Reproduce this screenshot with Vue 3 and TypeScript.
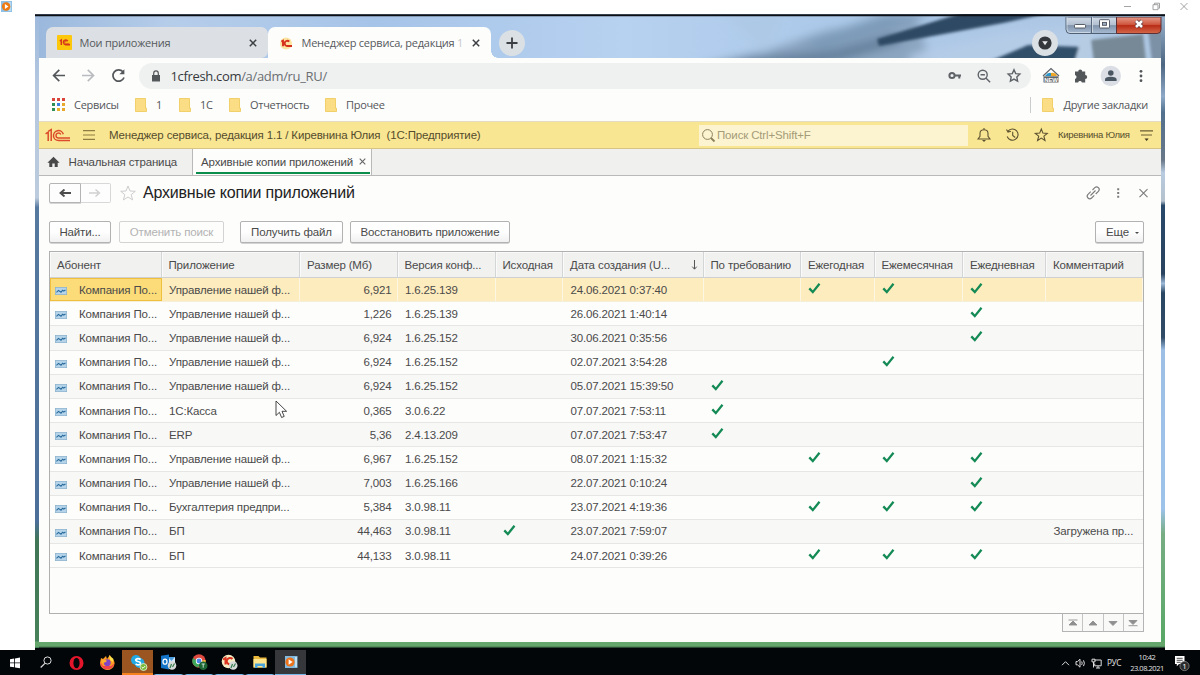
<script setup lang="ts">
interface Row {
  app: string
  size: string
  version: string
  date: string
  source?: boolean
  demand?: boolean
  year?: boolean
  month?: boolean
  day?: boolean
  comment?: string
}

const unf = 'Управление нашей ф...'
const rows: Row[] = [
  { app: unf, size: '6,921', version: '1.6.25.139', date: '24.06.2021 0:37:40', year: true, month: true, day: true },
  { app: unf, size: '1,226', version: '1.6.25.139', date: '26.06.2021 1:40:14', day: true },
  { app: unf, size: '6,924', version: '1.6.25.152', date: '30.06.2021 0:35:56', day: true },
  { app: unf, size: '6,924', version: '1.6.25.152', date: '02.07.2021 3:54:28', month: true },
  { app: unf, size: '6,924', version: '1.6.25.152', date: '05.07.2021 15:39:50', demand: true },
  { app: '1С:Касса', size: '0,365', version: '3.0.6.22', date: '07.07.2021 7:53:11', demand: true },
  { app: 'ERP', size: '5,36', version: '2.4.13.209', date: '07.07.2021 7:53:47', demand: true },
  { app: unf, size: '6,967', version: '1.6.25.152', date: '08.07.2021 1:15:32', year: true, month: true, day: true },
  { app: unf, size: '7,003', version: '1.6.25.166', date: '22.07.2021 0:10:24', day: true },
  { app: 'Бухгалтерия предпри...', size: '5,384', version: '3.0.98.11', date: '23.07.2021 4:19:36', year: true, month: true, day: true },
  { app: 'БП', size: '44,463', version: '3.0.98.11', date: '23.07.2021 7:59:07', source: true, comment: 'Загружена пр...' },
  { app: 'БП', size: '44,133', version: '3.0.98.11', date: '24.07.2021 0:39:26', year: true, month: true, day: true },
]

const headers = ['Абонент', 'Приложение', 'Размер (Мб)', 'Версия конф...', 'Исходная', 'Дата создания (U...', 'По требованию', 'Ежегодная', 'Ежемесячная', 'Ежедневная', 'Комментарий']
const flags = ['demand', 'year', 'month', 'day'] as const
const bookmarks = ['1', '1С', 'Отчетность', 'Прочее']
const appDots = ['#d9453a', '#d9453a', '#d9453a', '#2f8f57', '#3f7fe0', '#e8a82c', '#2f8f57', '#e8b02c', '#e8a82c']
const pagers = ['M3.5 3h9M8 4l-4 4h8z', 'M8 4l-4 4h8z', 'M8 8.5l-4-4h8z', 'M8 7.5l-4-4h8zM3.5 8.7h9']
</script>

<template>
  <div class="screen">
    <header class="player-bar">
      <svg class="player-icon" viewBox="0 0 12 12"><rect width="12" height="12" fill="#8fc1e6" /><rect x="8" y="1" width="3" height="10" fill="#b9dbf2" /><circle cx="5.6" cy="6" r="4.6" fill="#ee7a12" /><path d="M4.2 3.4v5.2L8.2 6z" fill="#fff" /></svg>
      <svg class="player-controls" viewBox="0 0 66 12"><path d="M1 5.500h7M30 3.700h5v5h-5zM31.500 3.700V2.200H36.500v5H35.300M57.500 2l7 7M64.500 2l-7 7" fill="none" stroke="#8b8b8b" stroke-width=".8" /></svg>
    </header>

    <main class="video">
      <svg class="wallpaper" viewBox="0 0 1130 634" preserveAspectRatio="none">
        <defs>
          <linearGradient id="left" x1="0" y1="0" x2="0" y2="1">
            <stop offset="0" stop-color="#9db9dc" /><stop offset=".12" stop-color="#b5c8e0" /><stop offset=".29" stop-color="#bccbdd" /><stop offset=".305" stop-color="#56799f" /><stop offset=".8" stop-color="#4b6f99" /><stop offset=".83" stop-color="#407556" /><stop offset="1" stop-color="#47835a" />
          </linearGradient>
          <linearGradient id="right" x1="0" y1="0" x2="0" y2="1">
            <stop offset="0" stop-color="#9db5cf" /><stop offset=".08" stop-color="#4d6783" /><stop offset=".13" stop-color="#8ea9c8" /><stop offset=".155" stop-color="#52708f" /><stop offset=".23" stop-color="#687788" /><stop offset=".25" stop-color="#b8cbe0" /><stop offset=".295" stop-color="#b5c1cd" /><stop offset=".302" stop-color="#29496b" /><stop offset=".41" stop-color="#29435f" /><stop offset=".425" stop-color="#9db9d8" /><stop offset=".44" stop-color="#294663" /><stop offset=".51" stop-color="#304b66" /><stop offset=".53" stop-color="#9dbfe5" /><stop offset=".78" stop-color="#9dc3eb" /><stop offset=".82" stop-color="#77ad83" /><stop offset="1" stop-color="#57a765" />
          </linearGradient>
          <linearGradient id="sky"><stop offset="0" stop-color="#9ab8dc" /><stop offset=".12" stop-color="#b6cdea" /><stop offset=".3" stop-color="#a6c4e8" /><stop offset=".52" stop-color="#b7d1f0" /><stop offset=".7" stop-color="#acc9e9" /><stop offset="1" stop-color="#adc6e2" /></linearGradient>
          <filter id="soft" x="-10%" y="-50%" width="120%" height="200%"><feGaussianBlur stdDeviation="5" /></filter>
          <filter id="soft2" x="-10%" y="-50%" width="120%" height="200%"><feGaussianBlur stdDeviation="1.700" /></filter>
          <clipPath id="strip"><rect width="1130" height="46" /></clipPath>
        </defs>
        <rect width="1130" height="46" fill="url(#sky)" />
        <g clip-path="url(#strip)">
          <g filter="url(#soft)">
            <path d="M650 55l80-18 60-20 90-16 20 60z" fill="#8ba5c1" />
            <path d="M658 56l60-13 80-8 60-16 10 10-60 18-70 16z" fill="#67839f" />
            <path d="M760 30l90-30h50l-110 35z" fill="#7d9bb9" />
            <path d="M690 0h60l-20 40z" fill="#adc9e6" />
            <path d="M880 40l100-22 80-8v40h-190z" fill="#b5cce7" />
          </g>
          <g filter="url(#soft2)">
            <path d="M842 25L930-2h88l-50 11-124 23z" fill="#2d4963" />
            <path d="M953 48l40-17 54 2v17z" fill="#324f6b" />
            <path d="M1056 26l52-6 3 28h-52z" fill="#778996" />
            <path d="M1040 46l8-26h8l-3 28z" fill="#b6cce2" />
            <path d="M1113 14h20v34h-16z" fill="#7c91a6" />
          </g>
        </g>
        <rect y="0" width="4" height="634" fill="url(#left)" />
        <rect x="1126" y="0" width="4" height="634" fill="url(#right)" />
        <rect y="627.500" width="1130" height="5.500" fill="#65a66c" />
        <path d="M4 633.400h1126" stroke="#2b4b34" stroke-width="1.200" />
        <path d="M0 1.200h1130" stroke="#0c1014" stroke-width="2" />
      </svg>

      <svg class="aero" viewBox="0 0 97 18">
        <defs>
          <linearGradient id="glass" x1="0" y1="0" x2="0" y2="1"><stop offset="0" stop-color="#d3dce8" /><stop offset=".48" stop-color="#b1bfd0" /><stop offset=".52" stop-color="#8194ab" /><stop offset="1" stop-color="#a7bbd2" /></linearGradient>
          <linearGradient id="redglass" x1="0" y1="0" x2="0" y2="1"><stop offset="0" stop-color="#e49c8a" /><stop offset=".45" stop-color="#cf563e" /><stop offset=".52" stop-color="#b92c16" /><stop offset="1" stop-color="#d56a4b" /></linearGradient>
        </defs>
        <path d="M1 0h50.500v16.500H5Q1 16.500 1 12.500z" fill="url(#glass)" stroke="#4f6075" stroke-width="1" />
        <path d="M51.500 0H96v12.500q0 4-4 4H51.500z" fill="url(#redglass)" stroke="#5d3036" stroke-width="1" />
        <path d="M26.500 0v16" stroke="#56677b" /><path d="M27.500 0v15.500M2 0v12q0 3.500 3 3.500h20" fill="none" stroke="#dce5ef" stroke-width=".7" />
        <rect x="9.500" y="7.500" width="11" height="3.500" rx=".8" fill="#fff" stroke="#48505c" stroke-width=".9" />
        <rect x="34.500" y="2.700" width="10" height="8.300" rx=".8" fill="#fff" stroke="#48505c" stroke-width=".9" /><rect x="37.500" y="5.400" width="4" height="2.900" fill="#a1afc2" stroke="#48505c" stroke-width=".9" />
        <path d="M71 4l6 6M77 4l-6 6" stroke="#57343a" stroke-width="4" /><path d="M71 4l6 6M77 4l-6 6" stroke="#fff" stroke-width="2.600" />
      </svg>

      <section class="browser">
        <div class="tabs">
          <div class="tab idle">
            <svg class="fav" viewBox="0 0 15 15"><rect width="15" height="15" rx="1" fill="#fdc70c" /><path d="M2.800 6l1.500-1v5M10.800 6.200A2.300 2.300 0 1 0 9 9.700h4" fill="none" stroke="#d6381d" stroke-width="1.500" /><path d="M9.700 7a1 1 0 1 0-.7 1.400h3.500" fill="none" stroke="#d6381d" stroke-width=".7" /></svg>
            <span class="tab-title">Мои приложения</span>
            <svg class="x" viewBox="0 0 8 8"><path d="M.8.8l6.400 6.400M7.200.8L.8 7.200" stroke="#3d4043" stroke-width="1.500" /></svg>
          </div>
          <div class="tab active">
            <svg class="fav round" viewBox="0 0 15 15"><circle cx="7" cy="7.500" r="6" fill="#fbe3a0" /><path d="M2.300 5.500L4 4.700v5.500M10.200 5.700A2.600 2.600 0 1 0 8.500 10H13" fill="none" stroke="#d6301d" stroke-width="1.900" /></svg>
            <span class="tab-title">Менеджер сервиса, редакция <i>1</i></span>
            <svg class="x" viewBox="0 0 8 8"><path d="M.8.8l6.400 6.400M7.200.8L.8 7.200" stroke="#3d4043" stroke-width="1.500" /></svg>
          </div>
          <svg class="round-btn" viewBox="0 0 26 26"><circle cx="13" cy="13" r="13" fill="#dbe0e5" /><path d="M7.500 13h11M13 7.500v11" stroke="#3b3f43" stroke-width="1.800" /></svg>
          <svg class="round-btn menu-btn" viewBox="0 0 26 26"><circle cx="13" cy="13" r="13" fill="#dbe0e5" /><circle cx="13" cy="13" r="6.600" fill="#34383c" /><path d="M10.200 11.300h5.600L13 15.200z" fill="#e8eaec" /></svg>
        </div>

        <div class="toolbar">
          <svg class="nav-icons" viewBox="0 0 80 20" fill="none" stroke="#54575a" stroke-width="1.700"><path d="M15 9.500H4M9.300 3.800L3.600 9.500l5.700 5.700" /><path d="M32 9.500h11M37.800 3.800l5.700 5.700-5.700 5.700" stroke="#b9bcbe" /><path d="M73 5.800A5.700 5.700 0 1 0 74 11.500" /><path d="M74.400 3.200v5h-5z" fill="#54575a" stroke="none" /></svg>
          <div class="omnibox">
            <svg class="lock" viewBox="0 0 10 12"><path d="M1 5h8v6.500H1z" fill="#54575a" /><path d="M2.700 5V3.200a2.300 2.300 0 0 1 4.600 0V5" fill="none" stroke="#54575a" stroke-width="1.200" /></svg>
            <span class="url"><b>1cfresh.com</b>/a/adm/ru_RU/</span>
            <svg class="omni-icons" viewBox="0 0 76 18" fill="none" stroke="#5f6368" stroke-width="1.400"><circle cx="5" cy="8.500" r="2.600" stroke-width="2" /><path d="M7.600 8.500H14M12.300 9v2.500" stroke-width="2" /><circle cx="35.700" cy="7.700" r="4.500" /><path d="M39.100 11.200l4 4M33.500 7.700h4.400" /><path d="M67 2.700l1.700 3.900 4.200.5-3.100 2.900.8 4.200-3.600-2.100-3.600 2.100.8-4.200-3.100-2.900 4.200-.5z" /></svg>
          </div>
          <svg class="ext-icons" viewBox="0 0 110 24">
            <path d="M3 12l8-7.500 8 7.500" fill="none" stroke="#5f6368" stroke-width="1.200" /><path d="M5 12q3-4 6-3v3z" fill="#2795c8" /><path d="M11 9q4-1 6 3h-6z" fill="#eda526" /><rect x="3.500" y="12.300" width="15" height="6.200" fill="#62676b" /><text x="4.300" y="17.500" font-size="5.500" font-weight="bold" textLength="13.400" lengthAdjust="spacingAndGlyphs" fill="#fff">NEW</text>
            <path d="M35 7.500h3.200a2 2 0 1 1 4 0h3v3.400a2 2 0 1 1 0 4V18.500h-3.300a2 2 0 0 0-3.800 0H35V15a2 2 0 0 0 0-3.900z" fill="#54575a" />
            <circle cx="70.800" cy="12" r="10.200" fill="#dbdfe5" /><circle cx="70.800" cy="9" r="2.800" fill="#4b5663" /><path d="M65 17v-1.500q0-2.700 5.800-2.700t5.800 2.700V17z" fill="#4b5663" />
            <g fill="#54575a"><circle cx="101" cy="7.300" r="1.400" /><circle cx="101" cy="12" r="1.400" /><circle cx="101" cy="16.700" r="1.400" /></g>
          </svg>
        </div>

        <div class="bookmarks">
          <div class="dots"><i v-for="(c, n) in appDots" :key="n" :style="{ background: c }"></i></div>
          <span class="services">Сервисы</span>
          <span v-for="(b, n) in bookmarks" :key="b" class="bm" :class="'bm' + n"><svg viewBox="0 0 12 14"><path d="M.5.500h10v9.700h1v3.300h-11z" fill="#fbdd86" stroke="#edc653" stroke-width=".8" /></svg>{{ b }}</span>
          <span class="bm other"><svg viewBox="0 0 12 14"><path d="M.5.500h10v9.700h1v3.300h-11z" fill="#fbdd86" stroke="#edc653" stroke-width=".8" /></svg>Другие закладки</span>
        </div>

        <div class="app-header">
          <svg class="logo" viewBox="0 0 26 15" fill="none" stroke="#db4b2c"><path d="M.6 5.800l2.600-1.700V13M3.200 3.300l3-1.800V13" stroke-width="1.500" /><path d="M18.300 6.200A5 5 0 1 0 13.500 12.600H25" stroke-width="1.500" /><path d="M15.800 6.500A2.500 2.500 0 1 0 13.500 10H25" stroke-width="1.400" /></svg>
          <svg class="burger" viewBox="0 0 12 12"><path d="M0 1.700h12M0 6h12M0 10.400h12" stroke="#8e7d43" stroke-width="1.200" /></svg>
          <span class="app-title">Менеджер сервиса, редакция 1.1 / Киревнина Юлия&nbsp; (1С:Предприятие)</span>
          <div class="search"><svg viewBox="0 0 15 15"><circle cx="6.500" cy="6.500" r="4.900" fill="none" stroke="#8b805a" /><path d="M10 10l3.500 3.500" stroke="#8b805a" stroke-width="1.800" /></svg><span>Поиск Ctrl+Shift+F</span></div>
          <svg class="head-icons" viewBox="0 0 76 16" fill="none" stroke="#5c5230" stroke-width="1.100"><path d="M2 12h12l-2-2.800V6.500C12 4 10.500 2.800 8 2.800S4 4 4 6.500v2.700zM8 1v2" /><path d="M6 13h4l-2 2z" fill="#5c5230" stroke="none" /><path d="M32 4.200A5.600 5.600 0 1 1 31.200 9.500M30.500 2.500L32 5l3-.7M36.700 4.700V8.500l2.500 2" /><path d="M65.300 2l1.600 4.100 4.400.3-3.400 2.800 1.100 4.300-3.700-2.400-3.700 2.400 1.100-4.300-3.400-2.800 4.400-.3z" /></svg>
          <span class="user">Киревнина Юлия</span>
          <svg class="filter" viewBox="0 0 13 13"><path d="M0 1.800h13M1 6h11" stroke="#6b5f37" stroke-width="1.200" /><path d="M4.500 9.500h4.200l-2.100 2.500z" fill="#40391f" /></svg>
        </div>

        <nav class="pages">
          <div class="page home"><svg viewBox="0 0 13 12"><path d="M6.500.8L.4 6.700h1.900V11h3V7.600h2.400V11h3V6.700h1.900z" fill="#484848" /></svg><span>Начальная страница</span></div>
          <div class="page current"><span>Архивные копии приложений</span><svg viewBox="0 0 7 7"><path d="M.7.7l5.600 5.600M6.300.7L.7 6.300" stroke="#666" stroke-width="1.100" /></svg></div>
        </nav>

        <section class="form">
          <div class="form-head">
            <div class="history"><span><svg viewBox="0 0 12 8"><path d="M12 4H3M5.500.5L1.500 4l4 3.500" fill="none" stroke="#4c4c4c" stroke-width="1.900" /></svg></span><span class="off"><svg viewBox="0 0 12 8"><path d="M0 4h9M6.500.5l4 3.500-4 3.500" fill="none" stroke="#cfcfcf" stroke-width="1.400" /></svg></span></div>
            <svg class="fav-star" viewBox="0 0 16 16"><path d="M8 1l2 5 5.300.3-4.100 3.300 1.400 5.300L8 12l-4.600 2.900 1.400-5.300L.7 6.300 6 6z" fill="none" stroke="#c7c7c7" stroke-width=".9" /></svg>
            <h1>Архивные копии приложений</h1>
            <svg class="form-icons" viewBox="0 0 64 16" fill="none" stroke="#7b7b7b" stroke-width="1.100"><path d="M5.700 6.700L3 9.400a2.500 2.500 0 0 0 3.600 3.600l2.700-2.700M7.500 5l2.300-2.300a2.500 2.500 0 0 1 3.600 3.600l-2.700 2.700M5.500 10.500l5-5" /><path d="M33.200 3.300v2M33.200 7v2M33.200 10.700v2" stroke-width="2" /><path d="M54.500 4.200l8 8M62.500 4.200l-8 8" /></svg>
          </div>
          <div class="commands">
            <button class="find">Найти...</button>
            <button class="cancel" disabled>Отменить поиск</button>
            <button class="get">Получить файл</button>
            <button class="restore">Восстановить приложение</button>
            <button class="more">Еще<i></i></button>
          </div>

          <div class="grid">
            <div class="row head">
              <div v-for="(h, n) in headers" :key="h" class="cell" :class="'h' + n"><span>{{ h }}</span><svg v-if="n === 5" class="sort" viewBox="0 0 7 10"><path d="M3.500 0v9M1.300 6.700l2.200 2.500 2.200-2.500" fill="none" stroke="#555" /></svg></div>
            </div>
            <div v-for="(r, n) in rows" :key="r.date" class="row" :class="{ selected: n === 0, even: n % 2 === 0 }">
              <div class="cell first"><svg viewBox="0 0 12 8"><rect x=".4" y=".4" width="11.200" height="7.200" fill="#b6d4e9" stroke="#8eb3cf" stroke-width=".8" /><path d="M1.500 5.400l2-2 2.500 1.800 1.700-2 1 .9 1.800-1" fill="none" stroke="#276b9e" stroke-width="1.100" /></svg><span>Компания По...</span></div>
              <div class="cell">{{ r.app }}</div>
              <div class="cell num">{{ r.size }}</div>
              <div class="cell">{{ r.version }}</div>
              <div class="cell"><svg v-if="r.source" class="check" viewBox="0 0 13 12"><path d="M1.300 6.400l3.500 3.700L11.500 1.700" /></svg></div>
              <div class="cell">{{ r.date }}</div>
              <div v-for="f in flags" :key="f" class="cell"><svg v-if="r[f]" class="check" viewBox="0 0 13 12"><path d="M1.300 6.400l3.500 3.700L11.500 1.700" /></svg></div>
              <div class="cell">{{ r.comment }}</div>
            </div>
          </div>
          <div class="pager"><span v-for="p in pagers" :key="p"><svg viewBox="0 0 16 12"><path :d="p" fill="#8f8f8f" stroke="#8f8f8f" stroke-width=".9" /></svg></span></div>
        </section>
      </section>
      <svg class="cursor" viewBox="0 0 13 19"><path d="M1 1v14.500l3.400-3.200 2.200 5.200 2.600-1.100L7 11.300h4.600z" fill="#fff" stroke="#333" stroke-width=".9" /></svg>
    </main>

    <footer class="taskbar">
      <div class="slot win"><svg viewBox="0 0 20 20"><path d="M5 6.200l4.200-.7v4H5zM10 5.400l5-.8v4.900h-5zM5 10.300h4.200v4L5 13.700zM10 10.300h5v4.900l-5-.8z" fill="#fff" /></svg></div>
      <div class="slot"><svg viewBox="0 0 20 20"><circle cx="11.500" cy="7.500" r="3.600" fill="none" stroke="#ddd" /><path d="M8.900 10.300L4.700 14.500" stroke="#ddd" stroke-width="1.200" /></svg></div>
      <div class="slot"><svg viewBox="0 0 20 20"><circle cx="10.500" cy="10" r="7" fill="#e5162b" /><ellipse cx="10.500" cy="10" rx="3.100" ry="5.200" fill="#05080b" /></svg></div>
      <div class="slot"><svg viewBox="0 0 20 20"><path d="M4 5l2 1 3-3 1 3 3-4 1 3q4 2 3.500 6A7.300 7.300 0 0 1 3 10z" fill="#ff9a24" /><path d="M3 9q1 7 7 7.600 6-.6 7.300-6L14 13H6z" fill="#f1434b" /><circle cx="10.300" cy="9.700" r="3.400" fill="#8144c5" /><path d="M12 2l1 5 3 2 .5-3z" fill="#ffe04a" /><path d="M4.500 7q4-1 5.500 1l-2 1.600-3 .4z" fill="#ffb02a" /></svg></div>
      <div class="slot skype"><svg viewBox="0 0 20 20"><circle cx="8" cy="8" r="5" fill="#20a9e4" /><circle cx="11.500" cy="11" r="5" fill="#20a9e4" /><path d="M12.700 7.500Q10 5.700 8 7.300q-1 1.500 1.700 2.200 3.600.6 2.600 2.600-2 1.800-4.700-.2" fill="none" stroke="#fff" stroke-width="1.700" /><circle cx="15.500" cy="15" r="3.500" fill="#79b93c" stroke="#e6f2da" stroke-width=".8" /><path d="M13.700 15l1.300 1.300 2.200-2.300" fill="none" stroke="#fff" /></svg></div>
      <div class="slot run"><svg viewBox="0 0 20 20"><path d="M10 5h7v9h-7z" fill="#d5e9f8" /><path d="M10 5h7l-3.500 4z" fill="#4a9ede" /><path d="M3 3.700L11 2.500v15L3 16z" fill="#1273c7" /><ellipse cx="7" cy="9.700" rx="2" ry="2.500" fill="none" stroke="#fff" stroke-width="1.300" /><circle cx="14" cy="13.500" r="4.300" fill="#d8dad9" /><path d="M12 16l1.500-4M14.500 15l2-3.500" stroke="#347c4b" stroke-width="1.200" /></svg></div>
      <div class="slot run"><svg viewBox="0 0 20 20"><circle cx="10" cy="9" r="6.700" fill="#de4a3f" /><path d="M4 6a6.700 6.700 0 0 0 5 9.600L11.500 11z" fill="#3da65b" /><path d="M11 9l5.600-1q.5 5-4.500 7.500z" fill="#f7cb42" /><circle cx="10" cy="9" r="3.200" fill="#fff" /><circle cx="10" cy="9" r="2.400" fill="#4c86e8" /><circle cx="14.200" cy="13.700" r="4.300" fill="#1d6433" /><path d="M12.600 12h3.200M14.200 12v3.700" stroke="#d9eadc" stroke-width=".9" /></svg></div>
      <div class="slot run"><svg viewBox="0 0 20 20"><circle cx="9.500" cy="9.500" r="6.800" fill="#f5edc3" /><path d="M4 7.500L6.500 6v6.500M13.500 7a3.300 3.300 0 1 0-2.700 5.500H16" fill="none" stroke="#da3421" stroke-width="2" /><circle cx="14.200" cy="13.500" r="4.300" fill="#d8dad9" /><path d="M12 16l1.500-4M14.500 15l2-3.500" stroke="#347c4b" stroke-width="1.200" /></svg></div>
      <div class="slot run"><svg viewBox="0 0 20 20"><path d="M3.500 4h5l1.500 1.500h6.500v10h-13z" fill="#e9b83d" /><path d="M3.500 7h13v8.500h-13z" fill="#ffe58e" /><path d="M5 16v-4.500h10V16h-2.500v-2h-5v2z" fill="#4ba3dc" /></svg></div>
      <div class="slot player run"><svg viewBox="0 0 20 20"><rect x="4" y="4" width="12.500" height="12" fill="#82bbdf" /><path d="M14 5h2v10h-2z" fill="#c4e1f2" /><circle cx="9" cy="10" r="4.600" fill="#ed731b" /><path d="M7.600 7.300v5.400l4-2.700z" fill="#fff" /></svg></div>
      <div class="tray">
        <svg viewBox="0 0 42 14" fill="none" stroke="#ddd"><path d="M1 9.200l3.500-3.500L8 9.200" /><path d="M15 5.600h1.500l2.500-2.400v8l-2.500-2.400H15zM20.700 5.500q1 1.700 0 3.400M22.500 4.300q1.800 3 0 5.800" /><path d="M33.500 4h6.700v5.800h-6.500V7.500M31 3.200h3v2.700h-3zM32.500 6v5.500M35 12h4M37 10v2" /></svg>
        <span class="lang">РУС</span>
        <div class="clock"><span>10:42</span><span>23.08.2021</span></div>
        <svg class="notice" viewBox="0 0 18 18"><path d="M1 2h9.500v8H5l-2.200 2.300V10H1z" fill="#fff" /><path d="M2.700 4.300h6M2.700 6.300h6M2.700 8.300h4" stroke="#222" stroke-width=".8" /><circle cx="10.500" cy="12" r="4.600" fill="#2b2b2b" stroke="#8b8b8b" stroke-width=".8" /><text x="8.200" y="15" font-size="8" fill="#fff">1</text></svg>
      </div>
    </footer>
  </div>
</template>

<style>
html, body { margin: 0; overflow: hidden; }
</style>

<style scoped>
.screen { width: 1200px; height: 675px; background: #fff; display: flex; flex-direction: column; font: 11.500px/14px "Liberation Sans", Arial, sans-serif; letter-spacing: -.15px; color: #4a4a4a; overflow: hidden; white-space: nowrap; }
svg { display: block; flex: none; }
* { box-sizing: border-box; }
.player-bar { height: 14px; flex: none; display: flex; justify-content: space-between; padding: 1px 11px 0 1px; }
.player-icon { width: 11px; height: 11px; }
.player-controls { width: 66px; height: 12px; }
.video { position: relative; width: 1130px; height: 634px; margin-left: 35px; flex: none; padding: 13px 4px 6px; display: flex; }
.wallpaper { position: absolute; inset: 0; width: 1130px; height: 634px; }
.aero { position: absolute; left: 1030px; top: 3px; width: 97px; height: 18px; }
.browser { position: relative; width: 1122px; height: 615px; display: flex; flex-direction: column; }

.tabs { height: 31px; display: flex; flex: none; padding-left: 7px; font-family: "Open Sans", "Noto Sans", sans-serif; font-size: 11px; letter-spacing: -.23px; color: #56595c; }
.tab { display: flex; align-items: center; width: 222px; height: 32px; border-radius: 7px 7px 0 0; padding: 0 11px; }
.tab.idle { background: #dce0e4; border-radius: 7px 7px 7px 0; height: 31px; }
.tab.active { background: #fdfdfc; width: 223px; position: relative; }
.tab.active::after { content: ""; position: absolute; left: 100%; bottom: 1px; width: 7px; height: 7px; background: radial-gradient(circle at 100% 0, transparent 6.500px, #fdfdfc 7px); }
.fav { width: 15px; height: 15px; margin-right: 7.500px; }
.tab-title { flex: 1; }
.tab-title i { font-style: normal; color: #c6c8ca; }
.x { width: 8px; height: 8px; }
.round-btn { width: 26px; height: 26px; margin: 2.500px 0 0 7.500px; }
.menu-btn { margin-left: auto; margin-right: 103.500px; }

.toolbar { height: 35px; flex: none; background: #fdfdfc; display: flex; align-items: center; padding-left: 11px; }
.nav-icons { width: 80px; height: 20px; margin-right: 9px; }
.omnibox { width: 892px; height: 26px; border-radius: 13px; background: #eff1f1; display: flex; align-items: center; padding-left: 12px; }
.lock { width: 10px; height: 12px; margin-right: 9.500px; }
.url { font: 13px/18px "Open Sans", "Noto Sans", sans-serif; letter-spacing: -.33px; color: #6b6e71; flex: 1; }
.url b { font-weight: 400; color: #36393c; }
.omni-icons { width: 76px; height: 18px; margin-right: 8px; }
.ext-icons { width: 110px; height: 24px; margin-left: 9px; }

.bookmarks { height: 28px; flex: none; background: #fdfdfc; display: flex; align-items: center; padding: 0 13px 5px; position: relative; font: 11px/16px "Open Sans", "Noto Sans", sans-serif; letter-spacing: -.3px; color: #54575a; }
.dots { display: grid; grid-template-columns: repeat(3, 3px); gap: 2px; }
.dots i { width: 3px; height: 3px; }
.services { margin-left: 9px; width: 61px; }
.bm { display: flex; align-items: center; }
.bm svg { width: 12px; height: 14px; margin-right: 9px; }
.bm0 { width: 44px; }
.bm1 { width: 50px; }
.bm2 { width: 96px; }
.other { margin-left: auto; border-left: 1px solid #c9cbcd; padding-left: 11px; }

.app-header { height: 28px; flex: none; background: #f9e692; border-top: 1px solid #e4dcc0; border-bottom: 1.500px solid #d5c585; display: flex; align-items: center; padding-left: 6px; color: #554c2d; }
.logo { width: 26px; height: 15px; }
.burger { width: 12px; height: 12px; margin-left: 12px; }
.app-title { margin-left: 14px; width: 590px; }
.search { width: 269px; height: 21px; background: #fcf4d0; display: flex; align-items: center; color: #a49b78; }
.search svg { width: 15px; height: 15px; margin: 0 1px 0 2px; }
.head-icons { width: 76px; height: 16px; margin-left: 8px; }
.user { margin-left: 6px; font-size: 9.500px; letter-spacing: -.27px; width: 76px; }
.filter { width: 13px; height: 13px; margin-left: 6px; }

.pages { height: 27px; flex: none; background: #f0f0ef; border-bottom: 1.500px solid #b9b9b9; display: flex; }
.page { display: flex; align-items: center; padding-bottom: 1px; }
.home { width: 153px; padding-left: 8px; }
.home svg { width: 13px; height: 12px; margin-right: 8.500px; }
.current { position: relative; width: 180px; background: #fdfdfc; border: 1px solid #b9b9b9; border-width: 0 1px; padding-left: 8px; justify-content: space-between; padding-right: 5px; }
.current::after { content: ""; position: absolute; left: 3px; right: 1px; bottom: 1px; height: 2px; background: #0b8d4b; }
.current svg { width: 7px; height: 7px; }

.form { flex: 1; background: #fdfdfc; padding: 7px 17px 0 10px; }
.form-head { display: flex; height: 20px; align-items: center; }
.history { display: flex; width: 62px; height: 20px; }
.history span { flex: 1; display: flex; align-items: center; justify-content: center; border: 1px solid #b4b4b4; border-radius: 2px 0 0 2px; background: #fdfdfd; box-shadow: 0 1px 0 #d5d5d5; }
.history .off { border-color: #d8d8d8; border-left: 0; border-radius: 0 2px 2px 0; box-shadow: none; }
.history svg { width: 12px; height: 8px; }
.fav-star { width: 16px; height: 16px; margin: 0 7px 0 9px; }
h1 { font: 400 16px/20px "Liberation Sans", Arial, sans-serif; letter-spacing: -.2px; color: #222; margin: 0; flex: 1; }
.form-icons { width: 64px; height: 16px; margin-right: -5px; }
.commands { display: flex; margin-top: 18px; height: 22px; }
button { font: 11.500px/14px "Liberation Sans", Arial, sans-serif; letter-spacing: -.15px; color: #4a4a4a; padding: 0; border: 1px solid #b2b2b2; border-radius: 2px; background: linear-gradient(#fefefe 50%, #f1f1f1); box-shadow: 0 .5px 0 #aaa; height: 22px; }
.find { width: 62px; }
.cancel { width: 105px; margin-left: 8px; color: #b3b3b3; border-color: #d3d3d3; box-shadow: none; background: #fdfdfc; }
.get { width: 103px; margin-left: 16px; }
.restore { width: 160px; margin-left: 7px; }
.more { width: 49px; margin-left: auto; display: flex; align-items: center; padding-left: 10px; }
.more i { border: 2px solid transparent; border-top: 2.500px solid #4a4a4a; border-bottom: 0; margin: 1px 0 0 6px; }

.grid { margin-top: 8px; height: 363px; width: 1095px; border: 1px solid #b0b0b0; }
.row { display: grid; grid-template-columns: 111.500px 138.500px 97.500px 98px 67.500px 140.500px 97.500px 73.500px 88.500px 83px 97px; height: 24.200px; border-bottom: 1px solid #e6e6e5; }
.row.even { background: #f8f8f7; }
.cell { display: flex; align-items: center; padding-left: 7.500px; overflow: hidden; }
.row.head { height: 26px; background: #f1f1f0; border-bottom: 1.500px solid #cfd0d1; }
.head .cell { padding-left: 7px; border-right: 1px solid #d4d5d6; box-shadow: inset 1px 1px #fafafa; }
.h5 { justify-content: space-between; }
.h5 .sort { width: 7px; height: 10px; margin-right: 5px; }
.row.selected { background: #fdecbd; border-color: #f5efd9; }
.selected .cell { border-right: 1px solid #fcf6e3; }
.selected .cell.first { background: #fcdc79; border: 1px solid #efbf3d; padding-left: 4px; }
.cell.first { padding-left: 5px; }
.first svg { width: 12px; height: 8px; margin: 3px 12px 0 0; }
.cell.num { justify-content: flex-end; padding-right: 6px; }
.selected .num { padding-right: 5px; }
.check { width: 13px; height: 12px; margin: -3px 0 0 -.5px; }
.check path { fill: none; stroke: #148a55; stroke-width: 2.300; }
.pager { display: flex; width: 82px; height: 18px; margin-left: 1013px; border: 1px solid #b4b4b4; border-top: 0; }
.pager span { flex: 1; display: flex; align-items: center; justify-content: center; background: #f9f9f8; border-left: 1px solid #c4c4c4; }
.pager span:first-child { border-left: 0; }
.pager svg { width: 16px; height: 12px; }
.cursor { position: absolute; left: 240px; top: 386px; width: 13px; height: 19px; }

.taskbar { position: relative; height: 27px; flex: none; display: flex; background: #030609; padding-top: 2px; }
.taskbar::before, .taskbar::after { content: ""; position: absolute; top: 0; height: 2px; width: 35px; background: #fff; }
.taskbar::before { left: 0; }
.taskbar::after { right: 0; }
.slot { width: 30.600px; height: 25px; display: flex; align-items: center; justify-content: center; }
.slot svg { width: 20px; height: 20px; }
.slot.run { border-bottom: 1.500px solid #75b8ea; border-left: 3px solid transparent; border-right: 3px solid transparent; background-clip: padding-box; }
.slot.skype { background: #9b5520; border-bottom: 2px solid #f5821f; }
.slot.run.player { background: #35373b; background-clip: border-box; border-left-width: 0; border-right-width: 0; }
.tray { margin-left: auto; display: flex; align-items: center; color: #e2e2e2; font: 9px/11px "Open Sans", "Noto Sans", sans-serif; }
.tray > svg:first-child { width: 42px; height: 14px; }
.lang { margin-left: 4px; width: 18px; font-size: 8.300px; letter-spacing: -.4px; }
.clock { display: flex; flex-direction: column; align-items: center; width: 40px; margin: 0 1px 0 2px; font-size: 7.500px; letter-spacing: -.45px; }
.notice { width: 18px; height: 18px; margin: 0 8px 0 6px; }
</style>
